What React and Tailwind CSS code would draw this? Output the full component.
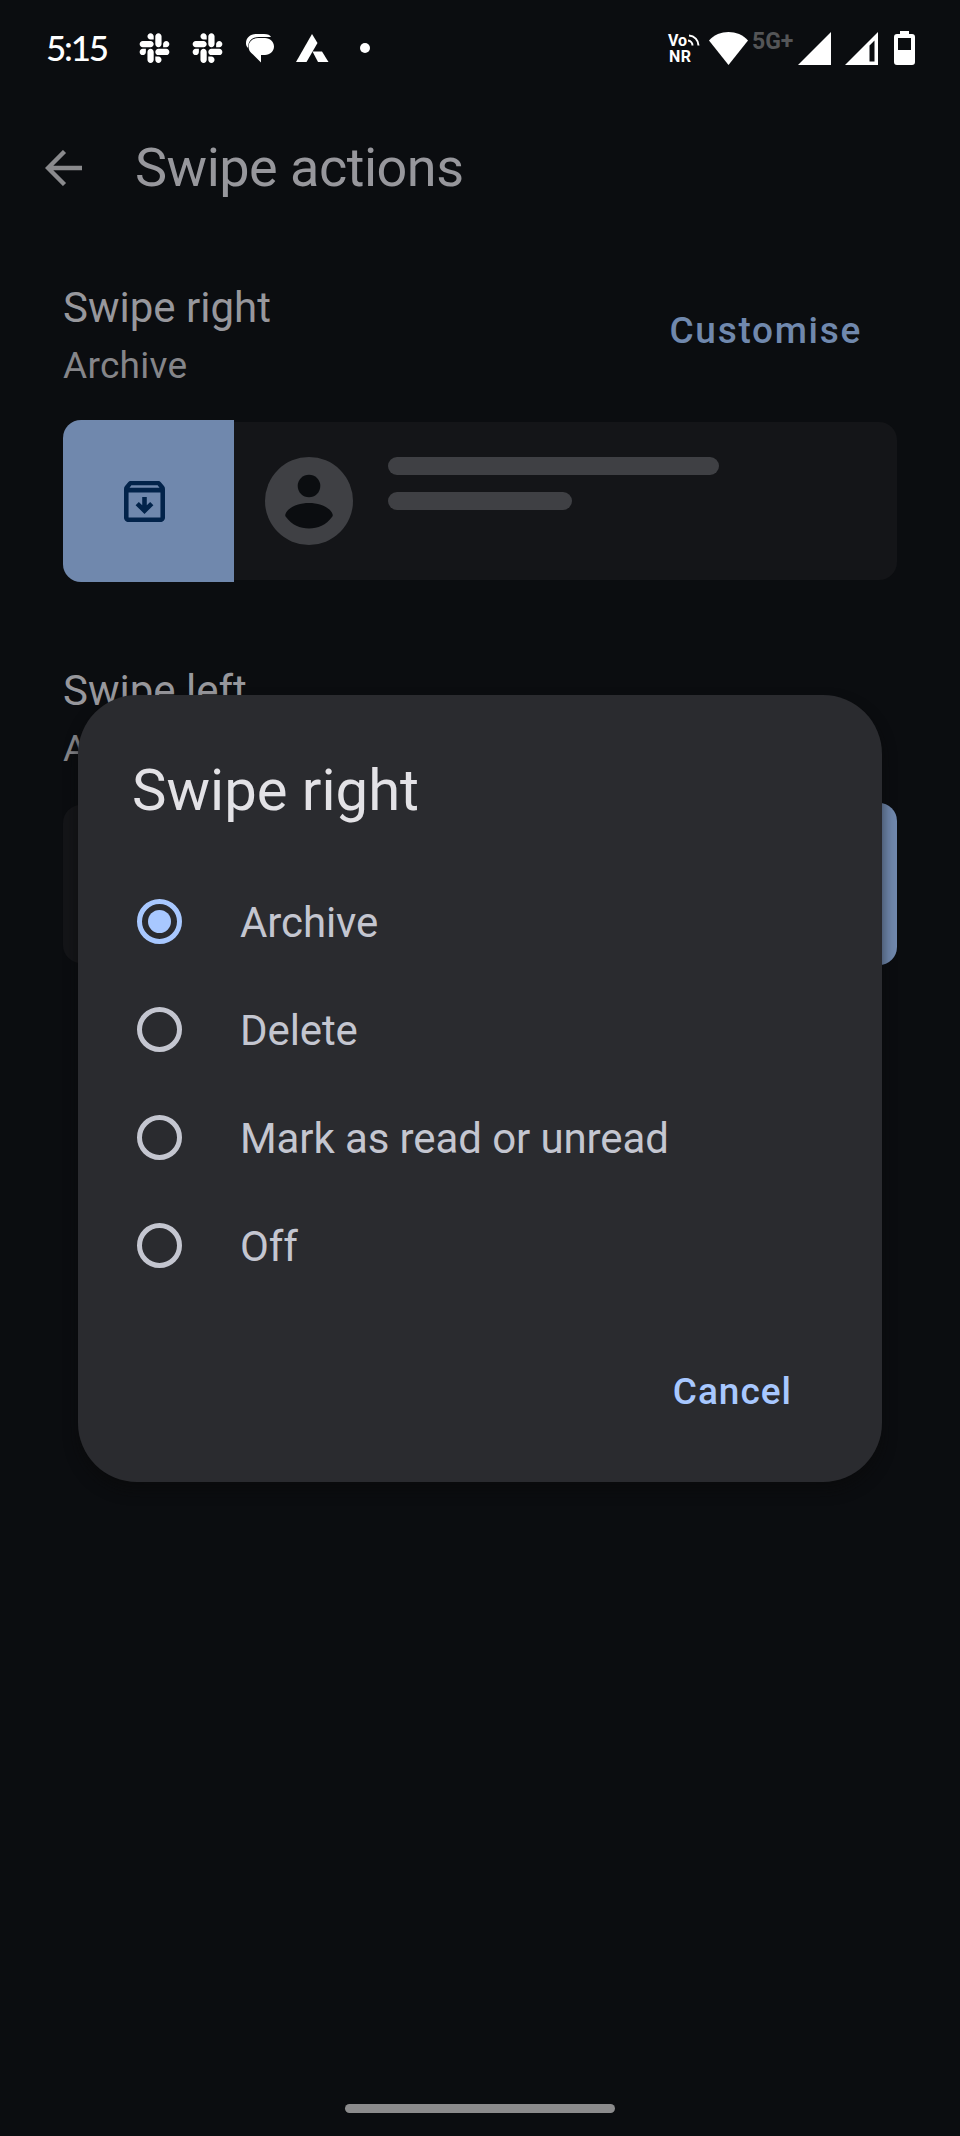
import { useState } from "react";
import { FaSlack } from "react-icons/fa";

const OPTIONS = ["Archive", "Delete", "Mark as read or unread", "Off"];

function StatusBar() {
  return (
    <div className="h-24 flex items-center justify-between pl-[46px] pr-[45px] text-white">
      <div className="flex items-center">
        <span className="w-[93px] pb-[2px] font-[Lato] font-medium text-[35px] leading-[36px] tracking-[-2.2px]">5:15</span>
        <FaSlack size={34} className="w-[31px] mr-[22px]" />
        <FaSlack size={34} className="w-[31px] mr-[23px]" />
        <svg width="28" height="29" viewBox="0 0 28 29" className="mr-[22px]">
          <path d="M10 0h8c4 0 6 1 7 3H13C6 3 2 7 2 14C0 12 0 10 0 9C0 4 4 0 10 0z" fill="currentColor" />
          <path d="M12 4h7c5 0 9 4 9 8.500s-4 8.500-9 8.500h-4v7.500l-8-8c-3-2-4.500-5-4.500-8C2.500 8 6.500 4 12 4z" fill="currentColor" />
        </svg>
        <svg width="33" height="28" viewBox="0 0 33 28" className="mr-[31px]">
          <path d="M16 0l5.500 9L10.500 28H0z" fill="currentColor" />
          <path d="M16.500 17.500h9.500L32.500 28H22z" fill="currentColor" />
        </svg>
        <span className="size-[10px] rounded-full bg-white" />
      </div>

      <div className="flex items-center">
        <div className="w-[41px] pt-px flex flex-col gap-[2px] font-[Roboto] font-bold text-[16px] leading-[14px]">
          <div className="flex">
            <span>Vo</span>
            <svg width="13" height="13" viewBox="0 0 13 13" fill="none" stroke="currentColor" strokeWidth="2">
              <path d="M1 6.500a5 5 0 0 1 4.500 5M2 1.500a10 10 0 0 1 9.500 10" />
            </svg>
          </div>
          <span className="pl-px tracking-[0.5px]">NR</span>
        </div>
        <svg width="39" height="33" viewBox="0 0 39 33" className="mr-[4px]">
          <path d="M0 8.500C10-2.800 29-2.800 39 8.500L19.500 33z" fill="currentColor" />
        </svg>
        <span className="w-[46px] pb-[12px] font-[Roboto] font-bold text-[23px] leading-[18px] text-[#545557]">5G+</span>
        <svg width="33" height="33" viewBox="0 0 33 33" className="mr-[14px]">
          <path d="M33 0v33H0z" fill="currentColor" />
        </svg>
        <svg width="33" height="33" viewBox="0 0 33 33" className="mr-[16px]">
          <path d="M33 0v33H0zM29.500 8.500L24.500 13.500V29.500h5z" fill="currentColor" fillRule="evenodd" />
        </svg>
        <svg width="21" height="34" viewBox="0 0 21 34">
          <path
            d="M6 0h9v3h3a3 3 0 0 1 3 3v25a3 3 0 0 1-3 3H3a3 3 0 0 1-3-3V6a3 3 0 0 1 3-3h3zM4 7v12h13V7z"
            fill="currentColor"
            fillRule="evenodd"
          />
        </svg>
      </div>
    </div>
  );
}

function Header() {
  return (
    <header className="h-36 flex items-center pl-[45px]">
      <svg width="37" height="36" viewBox="0 0 37 36" className="mr-[53px] text-[#8a8a8d]">
        <path d="M37 18H3.500M19.500 1.500L3 18l16.500 16.500" fill="none" stroke="currentColor" strokeWidth="4.400" />
      </svg>
      <h1 className="text-[54px] leading-[70px] tracking-[-0.5px] text-[#97979c]">Swipe actions</h1>
    </header>
  );
}

function ArchiveIcon() {
  return (
    <svg width="41" height="41" viewBox="3 3 18 18" fill="#02234a">
      <path
        fillRule="evenodd"
        d="M20.540 5.230l-1.390-1.680C18.880 3.210 18.470 3 18 3H6c-.47 0-.88.21-1.160.55L3.460 5.230C3.170 5.570 3 6.020 3 6.500V19c0 1.100.9 2 2 2h14c1.100 0 2-.9 2-2V6.500c0-.48-.17-.93-.46-1.270zM6.240 4.900h11.520l.83 1.100H5.420zM5 19V8h14v11z"
      />
      <path d="M12 17.500l3.900-3.900-1.400-1.400-1.500 1.500V10h-2v3.700l-1.500-1.500-1.400 1.400z" />
    </svg>
  );
}

function Avatar() {
  return (
    <svg width="88" height="88" viewBox="0 0 88 88">
      <circle cx="44" cy="44" r="44" fill="#3f4044" />
      <circle cx="44" cy="29" r="11.300" fill="#0b0d10" />
      <path
        d="M20.500 57C23 50 34 46 44 46s21 4 23.500 11c.5 1.300.3 2-.5 3C61 68 53 71.500 44 71.500S27 68 21 60c-.8-1-1-1.700-.5-3z"
        fill="#0b0d10"
      />
    </svg>
  );
}

function ActionTile({ side }) {
  const round = side === "left" ? "rounded-l-[18px]" : "rounded-r-[18px]";
  return (
    <div className={`w-[171px] h-[162px] shrink-0 flex items-center bg-[#7088ad] pl-[61px] ${round}`}>
      <ArchiveIcon />
    </div>
  );
}

function SwipeSection({ title, value, side }) {
  return (
    <section className="px-[63px]">
      <div className="flex items-center justify-between">
        <div>
          <h2 className="pt-px text-[42px] leading-[66px] text-[#97979c]">{title}</h2>
          <p className="text-[37px] leading-[50px] tracking-[0.3px] text-[#858589]">{value}</p>
        </div>
        <button className="mb-[5px] mr-[35px] text-[37px] leading-[51px] font-medium tracking-[1.7px] text-[#7088ad]">
          Customise
        </button>
      </div>

      <div className="mt-[29px] flex items-center">
        {side === "left" && <ActionTile side={side} />}
        <div
          className={`h-[158px] flex-1 flex bg-[#141518] pl-[31px] ${
            side === "left" ? "rounded-r-[18px]" : "rounded-l-[18px]"
          }`}
        >
          <div className="flex items-center">
            <Avatar />
          </div>
          <div className="pl-[35px] pt-[35px] flex flex-col gap-[17px]">
            <div className="w-[331px] h-[18px] rounded-full bg-[#3f4044]" />
            <div className="w-[184px] h-[18px] rounded-full bg-[#3f4044]" />
          </div>
        </div>
        {side === "right" && <ActionTile side={side} />}
      </div>
    </section>
  );
}

function Radio({ checked }) {
  return (
    <span
      className={`size-[45px] rounded-full border-[5px] flex items-center justify-center ${
        checked ? "border-[#a8c8ff]" : "border-[#c4c6d0]"
      }`}
    >
      {checked && <span className="size-[23px] rounded-full bg-[#a8c8ff]" />}
    </span>
  );
}

function SwipeDialog({ selected, onSelect }) {
  return (
    <div
      role="dialog"
      className="absolute left-[78px] top-[695px] w-[804px] h-[787px] rounded-[59px] bg-[#2a2b2f] pt-[60px] shadow-[0_8px_14px_rgba(10,10,10,0.6)]"
    >
      <h2 className="pl-[54px] text-[58px] leading-[70px] text-[#e3e2e6]">Swipe right</h2>

      <div className="mt-[42px]">
        {OPTIONS.map((option) => (
          <button
            key={option}
            onClick={() => onSelect(option)}
            className="w-full h-[108px] flex items-center gap-[58px] pl-[59px] text-[42px] text-[#c4c6d0]"
          >
            <Radio checked={option === selected} />
            <span className="pt-[3px] leading-[60px] tracking-[-0.1px]">{option}</span>
          </button>
        ))}
      </div>

      <div className="mt-[68px] pr-[90px] flex justify-end">
        <button className="text-[37px] leading-[50px] font-medium tracking-[1px] text-[#a8c8ff]">Cancel</button>
      </div>
    </div>
  );
}

export default function App() {
  const [selected, setSelected] = useState("Archive");

  return (
    <div className="relative w-[960px] h-[2136px] overflow-hidden flex flex-col bg-[#0b0d10] font-[Roboto,sans-serif]">
      <StatusBar />
      <Header />
      <main className="flex-1 pt-[34px] flex flex-col gap-[75px]">
        <SwipeSection title="Swipe right" value={selected} side="left" />
        <SwipeSection title="Swipe left" value="Archive" side="right" />
      </main>
      <div className="mb-[23px] self-center w-[270px] h-[9px] rounded-full bg-[#8b8b8c]" />

      <SwipeDialog selected={selected} onSelect={setSelected} />
    </div>
  );
}
